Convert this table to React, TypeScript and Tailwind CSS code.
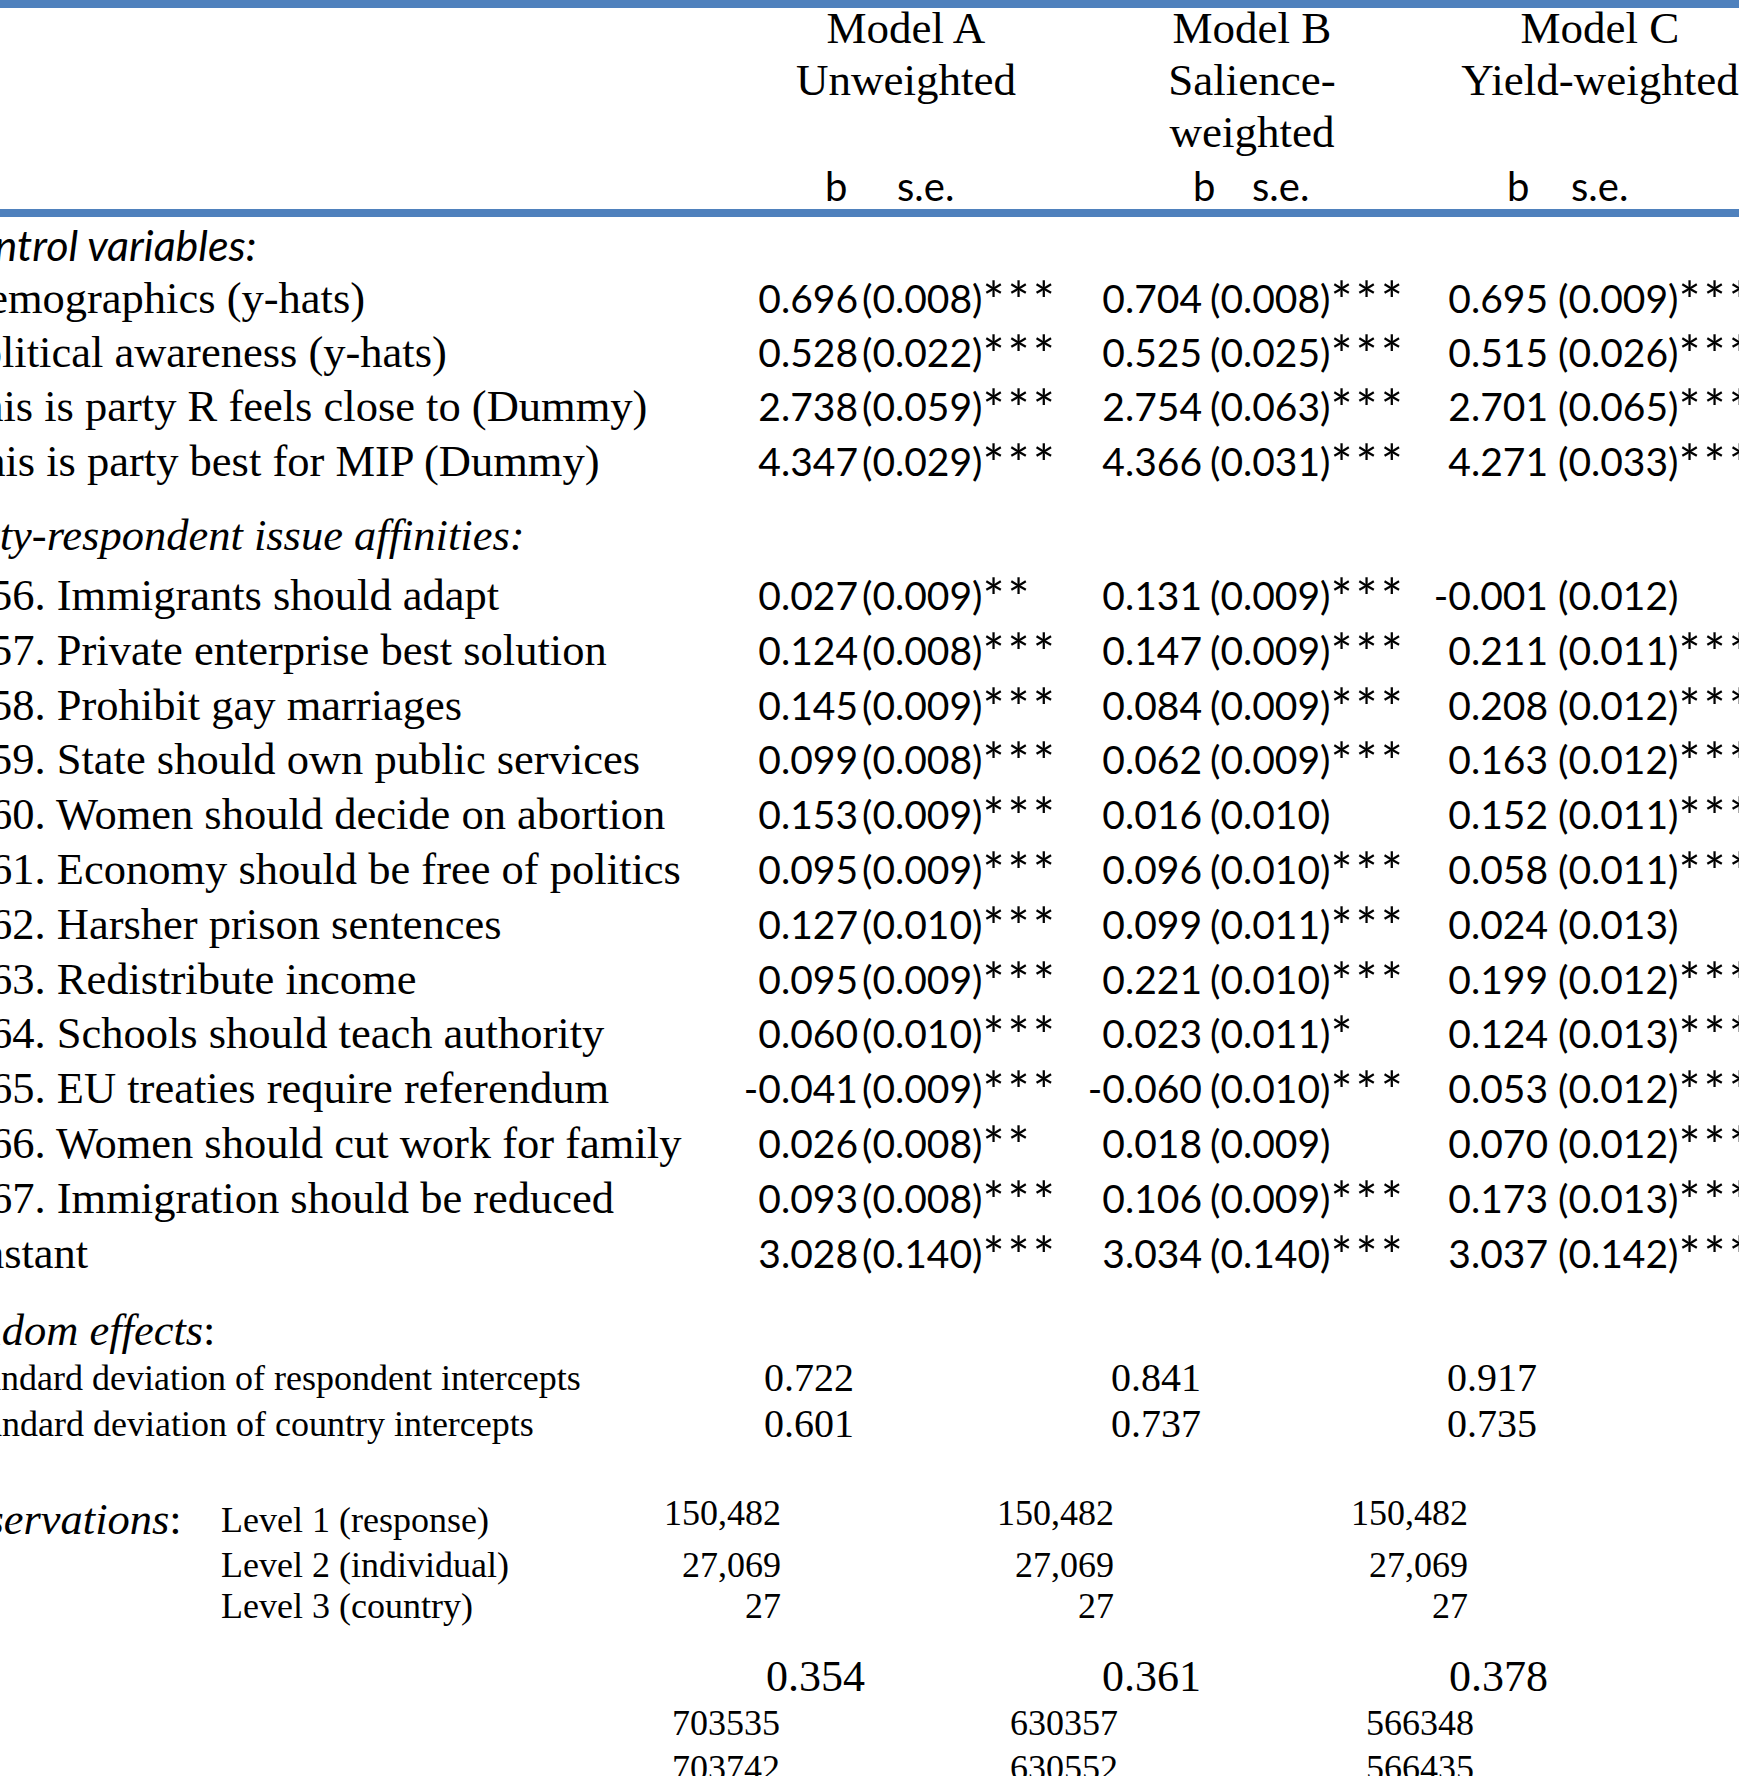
type Cell = [string, string];
type Row = { label: string; shift: string; a: Cell; b: Cell; c: Cell };

const controls: Row[] = [
  { label: "Demographics (y-hats)", shift: "-ml-[44px]", a: ["0.696", "(0.008)***"], b: ["0.704", "(0.008)***"], c: ["0.695", "(0.009)***"] },
  { label: "Political awareness (y-hats)", shift: "-ml-[45px]", a: ["0.528", "(0.022)***"], b: ["0.525", "(0.025)***"], c: ["0.515", "(0.026)***"] },
  { label: "This is party R feels close to (Dummy)", shift: "-ml-[46px]", a: ["2.738", "(0.059)***"], b: ["2.754", "(0.063)***"], c: ["2.701", "(0.065)***"] },
  { label: "This is party best for MIP (Dummy)", shift: "-ml-[44px]", a: ["4.347", "(0.029)***"], b: ["4.366", "(0.031)***"], c: ["4.271", "(0.033)***"] },
];

const issues: Row[] = [
  { label: "56. Immigrants should adapt", shift: "-ml-[10px]", a: ["0.027", "(0.009)**"], b: ["0.131", "(0.009)***"], c: ["-0.001", "(0.012)"] },
  { label: "57. Private enterprise best solution", shift: "-ml-[10px]", a: ["0.124", "(0.008)***"], b: ["0.147", "(0.009)***"], c: ["0.211", "(0.011)***"] },
  { label: "58. Prohibit gay marriages", shift: "-ml-[10px]", a: ["0.145", "(0.009)***"], b: ["0.084", "(0.009)***"], c: ["0.208", "(0.012)***"] },
  { label: "59. State should own public services", shift: "-ml-[10px]", a: ["0.099", "(0.008)***"], b: ["0.062", "(0.009)***"], c: ["0.163", "(0.012)***"] },
  { label: "60. Women should decide on abortion", shift: "-ml-[10px]", a: ["0.153", "(0.009)***"], b: ["0.016", "(0.010)"], c: ["0.152", "(0.011)***"] },
  { label: "61. Economy should be free of politics", shift: "-ml-[10px]", a: ["0.095", "(0.009)***"], b: ["0.096", "(0.010)***"], c: ["0.058", "(0.011)***"] },
  { label: "62. Harsher prison sentences", shift: "-ml-[10px]", a: ["0.127", "(0.010)***"], b: ["0.099", "(0.011)***"], c: ["0.024", "(0.013)"] },
  { label: "63. Redistribute income", shift: "-ml-[10px]", a: ["0.095", "(0.009)***"], b: ["0.221", "(0.010)***"], c: ["0.199", "(0.012)***"] },
  { label: "64. Schools should teach authority", shift: "-ml-[10px]", a: ["0.060", "(0.010)***"], b: ["0.023", "(0.011)*"], c: ["0.124", "(0.013)***"] },
  { label: "65. EU treaties require referendum", shift: "-ml-[10px]", a: ["-0.041", "(0.009)***"], b: ["-0.060", "(0.010)***"], c: ["0.053", "(0.012)***"] },
  { label: "66. Women should cut work for family", shift: "-ml-[10px]", a: ["0.026", "(0.008)**"], b: ["0.018", "(0.009)"], c: ["0.070", "(0.012)***"] },
  { label: "67. Immigration should be reduced", shift: "-ml-[10px]", a: ["0.093", "(0.008)***"], b: ["0.106", "(0.009)***"], c: ["0.173", "(0.013)***"] },
  { label: "Constant", shift: "-ml-[70px]", a: ["3.028", "(0.140)***"], b: ["3.034", "(0.140)***"], c: ["3.037", "(0.142)***"] },
];

const serif = "font-['Liberation_Serif','Times_New_Roman',serif]";
const sans = "font-['Lato','Carlito',sans-serif]";

// "(0.008)***" -> se part plus bigger stars, as in the printed table
function SE({ text }: { text: string }) {
  const i = text.indexOf("*");
  const se = i < 0 ? text : text.slice(0, i);
  const stars = i < 0 ? "" : text.slice(i);
  return (
    <>
      {se}
      {stars && (
        <span className="text-[52px] leading-[0px] tracking-[3px] align-[-7px]">{stars}</span>
      )}
    </>
  );
}

function DataRow({ row, h }: { row: Row; h: string }) {
  return (
    <div className={`flex ${h} leading-[55px] whitespace-nowrap`}>
      <div className={`w-[700px] shrink-0 text-[44.5px] ${serif}`}>
        <span className={`block ${row.shift}`}>{row.label}</span>
      </div>
      <div className={`${sans} text-[39px] flex shrink-0`}>
        <span className="w-[158px] shrink-0 text-right">{row.a[0]}</span>
        <span className="ml-[4px] w-[198px] shrink-0"><SE text={row.a[1]} /></span>
        <span className="w-[142px] shrink-0 text-right">{row.b[0]}</span>
        <span className="ml-[8px] w-[200px] shrink-0"><SE text={row.b[1]} /></span>
        <span className="w-[138px] shrink-0 text-right">{row.c[0]}</span>
        <span className="ml-[10px] shrink-0"><SE text={row.c[1]} /></span>
      </div>
    </div>
  );
}

function Heading({ children, className }: { children: React.ReactNode; className: string }) {
  return (
    <div className={`leading-[55px] whitespace-nowrap ${className}`}>
      {children}
    </div>
  );
}

export default function App() {
  return (
    <div className="w-[1739px] h-[1776px] overflow-hidden bg-white text-black">
      {/* header */}
      <div className="relative z-10 h-[8px] bg-[#4f81bd]" />
      <div className="h-[201px] flex flex-col">
        <div className={`flex h-[164px] shrink-0 -mt-[6px] text-[45px] leading-[52px] whitespace-nowrap ${serif}`}>
          <div className="w-[746px] shrink-0" />
          <div className="w-[320px] shrink-0 flex flex-col items-center">
            <span>Model A</span>
            <span>Unweighted</span>
          </div>
          <div className="w-[372px] shrink-0 flex flex-col items-center">
            <span>Model B</span>
            <span>Salience-</span>
            <span>weighted</span>
          </div>
          <div className="w-[324px] shrink-0 flex flex-col items-center">
            <span>Model C</span>
            <span>Yield-weighted</span>
          </div>
        </div>
        <div className={`flex h-[40px] shrink-0 text-[40px] leading-[40px] whitespace-nowrap ${sans}`}>
          <div className="w-[825px] shrink-0" />
          <span className="w-[72px] shrink-0">b</span>
          <span className="w-[296px] shrink-0">s.e.</span>
          <span className="w-[59px] shrink-0">b</span>
          <span className="w-[255px] shrink-0">s.e.</span>
          <span className="w-[64px] shrink-0">b</span>
          <span>s.e.</span>
        </div>
      </div>
      <div className="h-[8px] bg-[#4f81bd]" />

      {/* control variables */}
      <Heading className={`h-[54px] text-[43px] italic ${sans}`}>
        <span className="block -ml-[54px]">Control variables:</span>
      </Heading>
      {controls.map((r, i) => (
        <DataRow key={r.label} row={r} h={i < 2 ? "h-[54px]" : "h-[55px]"} />
      ))}

      {/* issue affinities */}
      <Heading className={`mt-[19px] h-[60px] text-[44.5px] italic ${serif}`}>
        <span className="block -ml-[67px]">Party-respondent issue affinities:</span>
      </Heading>
      {issues.map((r) => (
        <DataRow key={r.label} row={r} h="h-[54.8px]" />
      ))}

      {/* random effects */}
      <Heading className={`mt-[23px] h-[52px] text-[44.5px] ${serif}`}>
        <span className="block -ml-[70px]">
          <i>Random effects</i>:
        </span>
      </Heading>
      {[
        ["Standard deviation of respondent intercepts", "0.722", "0.841", "0.917", "-ml-[45px]"],
        ["Standard deviation of country intercepts", "0.601", "0.737", "0.735", "-ml-[44px]"],
      ].map((r) => (
        <div key={r[0]} className={`flex h-[46px] leading-[46px] whitespace-nowrap ${serif}`}>
          <div className="w-[700px] shrink-0 text-[36px]">
            <span className={`block ${r[4]}`}>{r[0]}</span>
          </div>
          <span className="w-[154px] shrink-0 text-right text-[40px]">{r[1]}</span>
          <span className="w-[347px] shrink-0 text-right text-[40px]">{r[2]}</span>
          <span className="w-[336px] shrink-0 text-right text-[40px]">{r[3]}</span>
        </div>
      ))}

      {/* observations */}
      <div className={`mt-[50px] ${serif} whitespace-nowrap`}>
        {[
          ["Level 1 (response)", "150,482", "h-[45px]"],
          ["Level 2 (individual)", "27,069", "h-[41px]"],
          ["Level 3 (country)", "27", "h-[71px]"],
        ].map((r, i) => (
          <div key={r[0]} className={`flex items-start ${r[2]}`}>
            <div className="w-[221px] shrink-0 text-[44.5px] leading-[46px] -mt-[1px]">
              {i === 0 && (
                <span className="block -ml-[68px]">
                  <i>Observations</i>:
                </span>
              )}
            </div>
            <span className="w-[400px] shrink-0 text-[36px] leading-[46px]">{r[0]}</span>
            {[
              "w-[160px]",
              "w-[333px]",
              "w-[354px]",
            ].map((w) => (
              <span
                key={w}
                className={`${w} shrink-0 text-right text-[36px] leading-[46px] ${i === 0 ? "-mt-[7px]" : ""}`}
              >
                {r[1]}
              </span>
            ))}
          </div>
        ))}
      </div>

      {/* fit statistics */}
      <div className={`flex h-[46px] leading-[46px] text-[44px] whitespace-nowrap ${serif}`}>
        <span className="w-[865px] shrink-0 text-right">0.354</span>
        <span className="w-[336px] shrink-0 text-right">0.361</span>
        <span className="w-[347px] shrink-0 text-right">0.378</span>
      </div>
      {[
        ["703535", "630357", "566348"],
        ["703742", "630552", "566435"],
      ].map((r) => (
        <div key={r[0]} className={`flex h-[45px] leading-[46px] text-[36px] whitespace-nowrap ${serif}`}>
          <span className="w-[780px] shrink-0 text-right">{r[0]}</span>
          <span className="w-[338px] shrink-0 text-right">{r[1]}</span>
          <span className="w-[356px] shrink-0 text-right">{r[2]}</span>
        </div>
      ))}
    </div>
  );
}
